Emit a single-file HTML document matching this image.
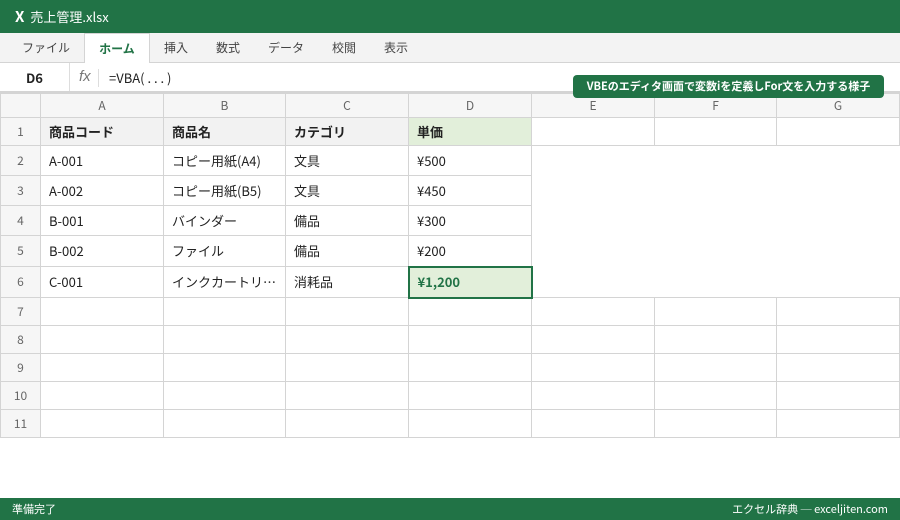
<!DOCTYPE html>
<html><head><meta charset="utf-8"><style>
*{margin:0;padding:0;box-sizing:border-box}
body{width:900px;height:520px;overflow:hidden;background:#fff;font-family:"Noto Sans CJK JP","Liberation Sans",sans-serif;color:#222;position:relative}
.title{position:absolute;left:0;top:0;width:900px;height:33px;background:#217346;color:#fff;font-size:13px;line-height:33px;padding-left:15px}
.title b{font-size:15px;margin-right:6px}
.ribbon{position:absolute;top:33px;left:0;width:900px;height:30px;background:#f3f3f3;border-bottom:1px solid #d4d4d4}
.tab{position:absolute;top:0;height:30px;line-height:30px;font-size:12px;color:#444}
.tab.on{background:#fff;border:1px solid #d4d4d4;border-bottom:none;height:31px;color:#217346;font-weight:bold;text-align:center}
.fbar{position:absolute;top:63px;left:0;width:900px;height:30px;background:#fff;border-bottom:2px solid #d4d4d4}
.nb{position:absolute;left:0;top:0;width:70px;height:28px;line-height:30px;text-align:center;font-weight:bold;font-size:13px;border-right:1px solid #ddd}
.fx{position:absolute;left:79px;top:5px;font-style:italic;color:#777;font-size:15px;font-family:"Liberation Sans",sans-serif}
.fxl{position:absolute;left:98px;top:6px;height:18px;border-left:1px solid #ddd}
.fv{position:absolute;left:109px;top:5px;font-size:13px;white-space:pre}
table{position:absolute;top:93px;left:0;border-collapse:collapse;table-layout:fixed;font-size:13px}
td{border:1px solid #d4d4d4;padding:0 8px;white-space:nowrap;overflow:hidden;line-height:16px}
td.h{background:#f6f6f6;text-align:center;color:#666;padding:0;font-size:12px}
tr.hd td{height:24px;background:#f6f6f6;text-align:center;color:#666;font-size:12px}
.r1 td{height:28px;font-weight:bold;background:#f2f2f2}
.r1 td.h{font-weight:normal;background:#f6f6f6}
.r1 td.w{background:#fff}
.r1 td.g{background:#e2efda}
.m td{height:30px}
.e td{height:28px}
td.sel{background:#e2efda;border:2px solid #217346;color:#217346;font-weight:bold}
td.blank{border-right:none;border-top:1px solid #d4d4d4}
.tip{position:absolute;left:573px;top:75px;width:311px;height:23px;background:#217346;color:#fff;font-size:11px;font-weight:bold;border-radius:4px;text-align:center;line-height:23px}
.status{position:absolute;left:0;top:498px;width:900px;height:22px;background:#217346;color:#fff;font-size:11px;line-height:22px;padding:0 12px}
.status span{float:right}
</style></head><body>
<div class="title"><b>X</b>売上管理.xlsx</div>
<div class="ribbon">
<div class="tab" style="left:22px">ファイル</div>
<div class="tab on" style="left:84px;width:66px">ホーム</div>
<div class="tab" style="left:164px">挿入</div>
<div class="tab" style="left:216px">数式</div>
<div class="tab" style="left:268px">データ</div>
<div class="tab" style="left:332px">校閲</div>
<div class="tab" style="left:384px">表示</div>
</div>
<div class="fbar"><div class="nb">D6</div><div class="fx">fx</div><div class="fxl"></div><div class="fv">=VBA( . . . )</div></div>
<table>
<colgroup><col style="width:40px"><col style="width:123px"><col style="width:122px"><col style="width:123px"><col style="width:123px"><col style="width:123px"><col style="width:122px"><col style="width:123px"></colgroup>
<tr class="hd"><td></td><td>A</td><td>B</td><td>C</td><td>D</td><td>E</td><td>F</td><td>G</td></tr>
<tr class="r1"><td class="h">1</td><td>商品コード</td><td>商品名</td><td>カテゴリ</td><td class="g">単価</td><td class="w"></td><td class="w"></td><td class="w"></td></tr>
<tr class="m"><td class="h">2</td><td>A-001</td><td>コピー用紙(A4)</td><td>文具</td><td>¥500</td><td class="blank" colspan="3" rowspan="5"></td></tr>
<tr class="m"><td class="h">3</td><td>A-002</td><td>コピー用紙(B5)</td><td>文具</td><td>¥450</td></tr>
<tr class="m"><td class="h">4</td><td>B-001</td><td>バインダー</td><td>備品</td><td>¥300</td></tr>
<tr class="m" style="height:31px"><td class="h" style="height:31px">5</td><td>B-002</td><td>ファイル</td><td>備品</td><td>¥200</td></tr>
<tr class="m"><td class="h" style="height:31px">6</td><td>C-001</td><td>インクカートリ…</td><td>消耗品</td><td class="sel">¥1,200</td></tr>
<tr class="e"><td class="h">7</td><td></td><td></td><td></td><td></td><td></td><td></td><td></td></tr>
<tr class="e"><td class="h">8</td><td></td><td></td><td></td><td></td><td></td><td></td><td></td></tr>
<tr class="e"><td class="h">9</td><td></td><td></td><td></td><td></td><td></td><td></td><td></td></tr>
<tr class="e"><td class="h">10</td><td></td><td></td><td></td><td></td><td></td><td></td><td></td></tr>
<tr class="e"><td class="h">11</td><td></td><td></td><td></td><td></td><td></td><td></td><td></td></tr>
</table>
<div class="tip">VBEのエディタ画面で変数iを定義しFor文を入力する様子</div>
<div class="status">準備完了<span>エクセル辞典 ─ exceljiten.com</span></div>
</body></html>
